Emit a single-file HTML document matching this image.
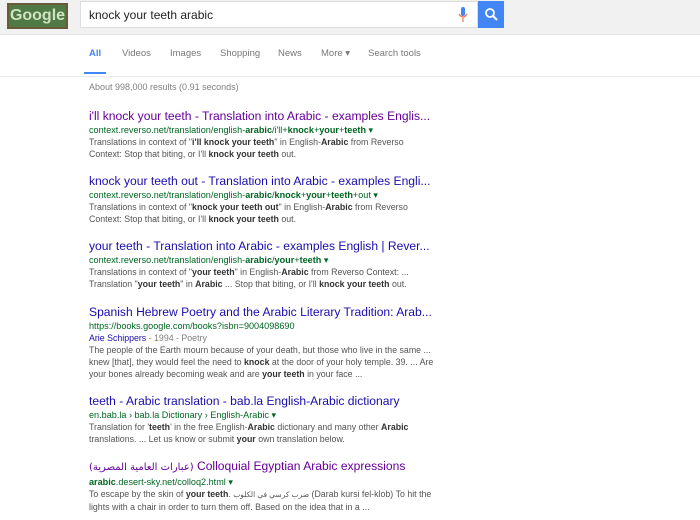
<!DOCTYPE html><html><head><meta charset="utf-8"><style>
*{margin:0;padding:0;box-sizing:border-box}
body{width:700px;height:520px;background:#fff;font-family:"Liberation Sans",Arial,sans-serif;position:relative;overflow:hidden}
.hdr{position:absolute;left:0;top:0;width:700px;height:35px;background:#f1f1f1;border-bottom:1px solid #e5e5e5}
.logo{position:absolute;left:7px;top:3px;width:61px;height:26px;background:#4f7a45;border:2px solid #6b5a3a;color:#cfe3c0;font-weight:bold;font-size:16px;text-align:center;line-height:22px}
.box{position:absolute;left:80px;top:1px;width:398px;height:27px;background:#fff;border:1px solid #ddd;font-size:12px;padding:6px 8px;color:#222}
.btn{position:absolute;left:478px;top:1px;width:26px;height:27px;background:#4285f4}
.tabs{position:absolute;top:48px;font-size:9.5px;color:#777}
.tabs span{position:absolute;white-space:nowrap}
.ul{position:absolute;left:84px;top:72px;width:22px;height:2px;background:#4285f4}
.sep{position:absolute;left:0;top:76px;width:700px;height:1px;background:#ebebeb}
.cnt{position:absolute;left:89px;top:82px;font-size:9px;color:#808080}
.r{position:absolute;left:89px;width:420px}
.t{font-size:12.1px;color:#1a0dab;white-space:nowrap;line-height:16px}
.v{color:#609}
.u{font-size:9.1px;color:#006621;line-height:12px;white-space:nowrap}
.s{font-size:8.8px;color:#545454;line-height:12px;width:345px}
b{color:#333}
.u b{color:#006621}
.a{color:#1a0dab}
</style></head><body>
<div class="hdr"></div>
<div class="logo">Google</div>
<div class="box">knock your teeth arabic</div>
<svg style="position:absolute;left:458px;top:7px" width="10" height="16"><rect x="3" y="0" width="4" height="9" rx="2" fill="#4285f4"/><path d="M1 7q4 6 8 0" stroke="#e74" fill="none" stroke-width="1.3"/><rect x="4.4" y="11" width="1.2" height="4" fill="#e74"/></svg>
<div class="btn"><svg width="26" height="27"><circle cx="12" cy="12" r="4" stroke="#fff" stroke-width="1.8" fill="none"/><path d="M15 15l4 4" stroke="#fff" stroke-width="2"/></svg></div>
<div class="tabs"><span style="left:89px;color:#4285f4;font-weight:bold">All</span><span style="left:122px">Videos</span><span style="left:170px">Images</span><span style="left:220px">Shopping</span><span style="left:278px">News</span><span style="left:321px">More ▾</span><span style="left:368px">Search tools</span></div>
<div class="ul"></div><div class="sep"></div>
<div class="cnt">About 998,000 results (0.91 seconds)</div>
<div class="r" style="top:108px"><div class="t v">i'll knock your teeth - Translation into Arabic - examples Englis...</div><div class="u">context.reverso.net/translation/english-<b>arabic</b>/i'll+<b>knock</b>+<b>your</b>+<b>teeth</b> ▾</div><div class="s">Translations in context of "<b>i'll knock your teeth</b>" in English-<b>Arabic</b> from Reverso Context: Stop that biting, or I'll <b>knock your teeth</b> out.</div></div>
<div class="r" style="top:173px"><div class="t">knock your teeth out - Translation into Arabic - examples Engli...</div><div class="u">context.reverso.net/translation/english-<b>arabic</b>/<b>knock</b>+<b>your</b>+<b>teeth</b>+out ▾</div><div class="s">Translations in context of "<b>knock your teeth out</b>" in English-<b>Arabic</b> from Reverso Context: Stop that biting, or I'll <b>knock your teeth</b> out.</div></div>
<div class="r" style="top:238px"><div class="t">your teeth - Translation into Arabic - examples English | Rever...</div><div class="u">context.reverso.net/translation/english-<b>arabic</b>/<b>your</b>+<b>teeth</b> ▾</div><div class="s">Translations in context of "<b>your teeth</b>" in English-<b>Arabic</b> from Reverso Context: ... Translation "<b>your teeth</b>" in <b>Arabic</b> ... Stop that biting, or I'll <b>knock your teeth</b> out.</div></div>
<div class="r" style="top:304px"><div class="t">Spanish Hebrew Poetry and the Arabic Literary Tradition: Arab...</div><div class="u">https://books.google.com/books?isbn=9004098690</div><div class="s" style="color:#808080"><span class="a">Arie Schippers</span> - 1994 - Poetry</div><div class="s">The people of the Earth mourn because of your death, but those who live in the same ... knew [that], they would feel the need to <b>knock</b> at the door of your holy temple. 39. ... Are your bones already becoming weak and are <b>your teeth</b> in your face ...</div></div>
<div class="r" style="top:393px"><div class="t">teeth - Arabic translation - bab.la English-Arabic dictionary</div><div class="u">en.bab.la › bab.la Dictionary › English-Arabic ▾</div><div class="s">Translation for '<b>teeth</b>' in the free English-<b>Arabic</b> dictionary and many other <b>Arabic</b> translations. ... Let us know or submit <b>your</b> own translation below.</div></div>
<div class="r" style="top:458px"><div class="t v"><span style="font-family:'DejaVu Sans',sans-serif;font-size:10px">(عبارات العامية المصرية)</span> Colloquial Egyptian Arabic expressions</div><div class="u"><b>arabic</b>.desert-sky.net/colloq2.html ▾</div><div class="s">To escape by the skin of <b>your teeth</b>. <span style="font-size:7.5px">ضرب كرسي في الكلوب</span> (Darab kursi fel-klob) To hit the lights with a chair in order to turn them off. Based on the idea that in a ...</div></div>
</body></html>
